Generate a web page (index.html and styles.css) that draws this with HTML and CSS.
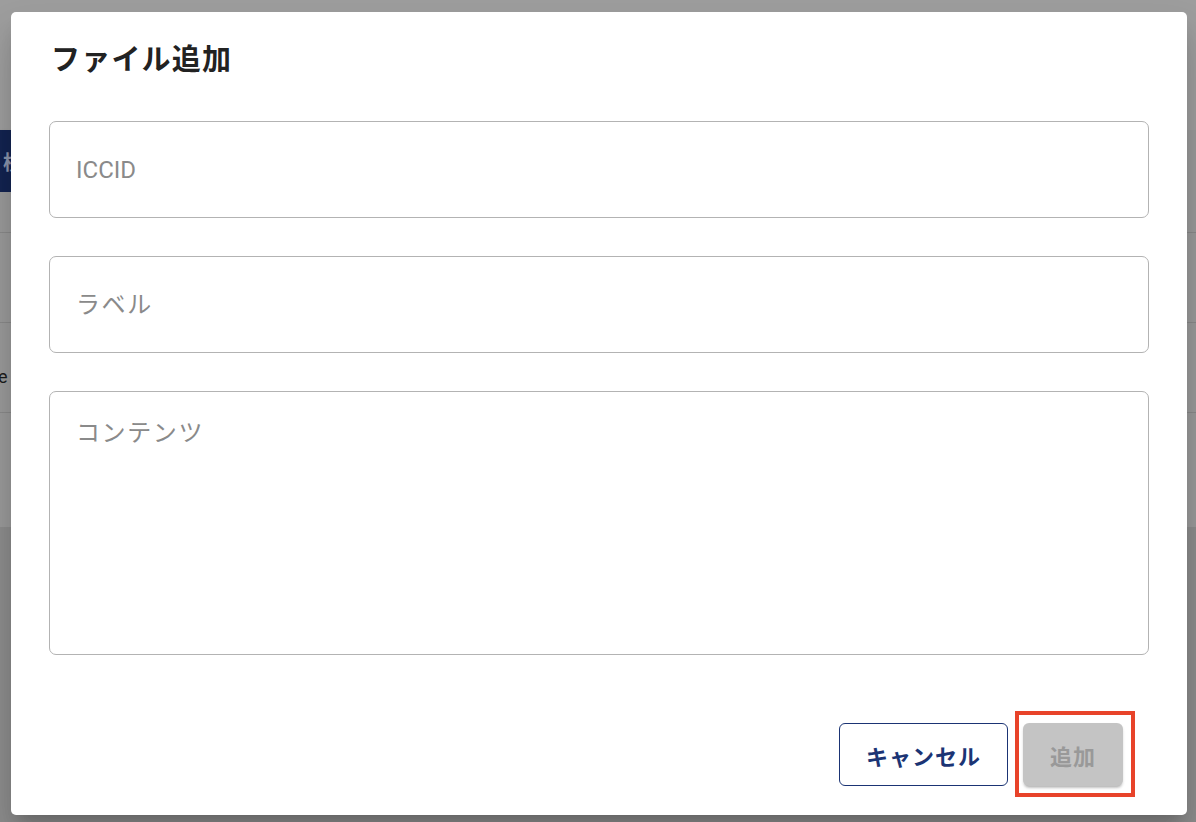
FILE: index.html
```html
<!DOCTYPE html>
<html lang="ja">
<head>
<meta charset="utf-8">
<title>ファイル追加</title>
<link rel="stylesheet" href="styles.css">
</head>
<body>
<div class="page">
  <div class="page-top"></div>
  <div class="page-barline"><div class="page-bar"><span class="bar-char">検</span></div></div>
  <div class="page-row r1"></div>
  <div class="page-row r2"></div>
  <div class="page-row r3"><span class="row-text">e</span></div>
  <div class="page-row r4"></div>
  <div class="page-bottom"></div>
</div>

<div class="dialog">
  <h2 class="dialog-title">ファイル追加</h2>
  <div class="fields">
    <div class="field"><span class="placeholder">ICCID</span></div>
    <div class="field"><span class="placeholder jp">ラベル</span></div>
    <div class="field field-multi"><span class="placeholder jp">コンテンツ</span></div>
  </div>
  <div class="actions">
    <button class="btn btn-outline">キャンセル</button>
    <div class="btn-wrap">
      <button class="btn btn-disabled">追加</button>
      <span class="highlight"></span>
    </div>
  </div>
</div>
</body>
</html>
```

FILE: styles.css
```css
html, body {
  margin: 0;
  padding: 0;
}
body {
  width: 1196px;
  height: 822px;
  overflow: hidden;
  font-family: Roboto, "Noto Sans CJK JP", sans-serif;
  background: #8c8c8c;
}
.page {
  display: flex;
  flex-direction: column;
  height: 822px;
}
.page-top {
  height: 130px;
  background: #9d9d9d;
}
.page-barline {
  height: 62px;
  background: #999999;
  display: flex;
}
.page-bar {
  width: 760px;
  background: #132350;
  box-shadow: 0 3px 4px rgba(0,0,0,0.25);
  display: flex;
  align-items: center;
}
.bar-char {
  color: #8a93aa;
  font-family: "Noto Sans CJK JP", sans-serif;
  font-weight: 700;
  font-size: 20px;
  margin-left: 3px;
}
.page-row {
  background: #999999;
  border-bottom: 1px solid #888888;
  display: flex;
  align-items: center;
}
.r1 { height: 40px; }
.r2 { height: 89px; }
.r3 { height: 89px; }
.r4 { height: 114px; border-bottom: none; }
.row-text {
  font-family: Roboto, sans-serif;
  font-size: 18px;
  color: #1c1c1c;
  margin-left: -2px;
  margin-top: 18px;
}
.page-bottom {
  flex: 1;
  background: #8c8c8c;
}

.dialog {
  position: absolute;
  left: 11px;
  top: 12px;
  width: 1176px;
  height: 803px;
  box-sizing: border-box;
  background: #ffffff;
  border-radius: 5px;
  box-shadow: 0 11px 15px -7px rgba(0,0,0,0.2), 0 24px 38px 3px rgba(0,0,0,0.14);
  padding: 0 38px;
  display: flex;
  flex-direction: column;
}
.dialog-title {
  margin: 0;
  padding: 25px 0 0 2px;
  height: 82px;
  box-sizing: border-box;
  font-family: "Noto Sans CJK JP", sans-serif;
  font-weight: 700;
  font-size: 29px;
  line-height: 40px;
  color: #222222;
  letter-spacing: 1.2px;
}
.fields {
  display: flex;
  flex-direction: column;
  gap: 38px;
  margin-top: 27px;
}
.field {
  height: 97px;
  box-sizing: border-box;
  border: 1px solid #b3b3b3;
  border-radius: 7px;
  display: flex;
  align-items: center;
  padding-left: 26px;
}
.field-multi {
  height: 264px;
  align-items: flex-start;
  padding-top: 25px;
}
.placeholder {
  font-family: Roboto, "Noto Sans CJK JP", sans-serif;
  font-size: 24px;
  color: #8a8a8a;
  line-height: 32px;
}
.placeholder.jp {
  letter-spacing: 1.6px;
}
.actions {
  display: flex;
  justify-content: flex-end;
  gap: 15px;
  margin-top: 68px;
  padding-right: 26px;
}
.btn {
  height: 63px;
  box-sizing: border-box;
  border-radius: 6px;
  font-family: "Noto Sans CJK JP", sans-serif;
  font-weight: 700;
  font-size: 22px;
  padding: 0;
  cursor: pointer;
}
.btn-outline {
  width: 169px;
  background: #ffffff;
  border: 1px solid #1b3474;
  color: #1b3474;
  letter-spacing: 1px;
}
.btn-wrap {
  position: relative;
}
.btn-disabled {
  width: 100px;
  background: #c4c4c4;
  border: none;
  color: #999999;
  letter-spacing: 1px;
  box-shadow: 0 3px 3px -2px rgba(0,0,0,0.25), 0 2px 3px rgba(0,0,0,0.12);
}
.highlight {
  position: absolute;
  left: -8px;
  top: -12px;
  width: 120px;
  height: 86px;
  box-sizing: border-box;
  border: 4px solid #e8432a;
  pointer-events: none;
}
```
